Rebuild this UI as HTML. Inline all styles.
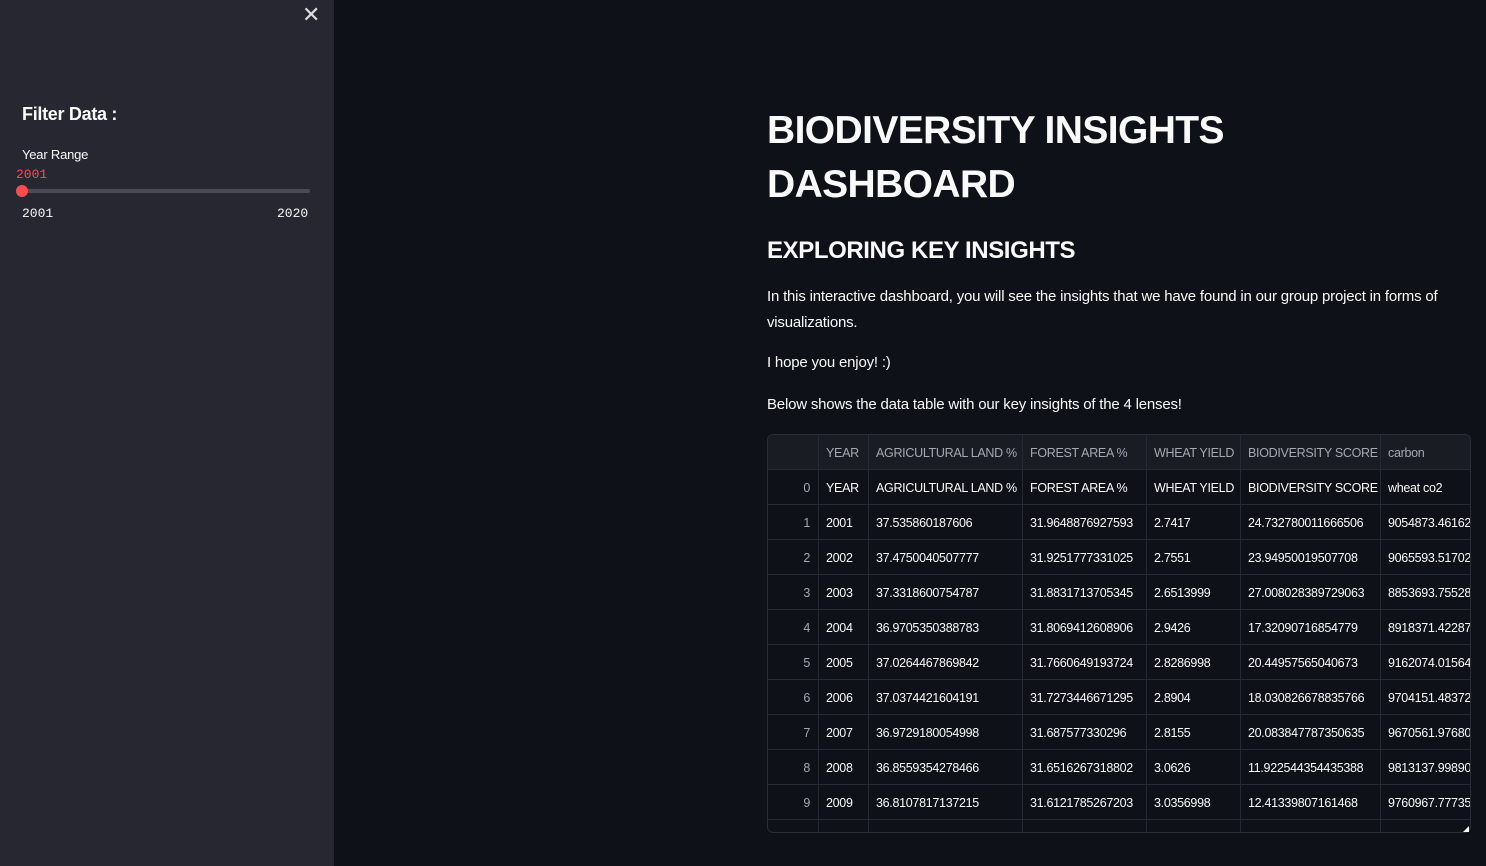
<!DOCTYPE html>
<html><head><style>
*{margin:0;padding:0;box-sizing:border-box}
body{width:1486px;height:866px;background:#0e1117;color:#fafafa;font-family:"Liberation Sans",sans-serif;position:relative;overflow:hidden}
.sb{position:absolute;left:0;top:0;width:334px;height:866px;background:#262730}
.abs{position:absolute;white-space:nowrap}
.mono{font-family:"Liberation Mono",monospace;font-size:13px}
.tbl{position:absolute;left:767px;top:434px;width:704px;height:399px;border:1px solid #2a2d36;border-radius:6px;overflow:hidden;background:#0e1117}
.c{position:absolute;height:35px;line-height:36px;font-size:12.5px;letter-spacing:-0.3px;padding-left:7px;white-space:nowrap;overflow:hidden;border-right:1px solid #262a33;border-bottom:1px solid #262a33}
.h{background:#1a1c23;color:#a3a8b4}
.idx{text-align:right;padding-right:8px;color:#a3a8b4}
</style></head><body>
<div class="sb">
<div class="abs" style="left:302px;top:2px;font-size:22px;color:#ddd">✕</div>
<div class="abs" style="left:22px;top:104px;font-size:18px;font-weight:bold;letter-spacing:-0.3px">Filter Data :</div>
<div class="abs" style="left:22px;top:147px;font-size:13px;letter-spacing:-0.2px">Year Range</div>
<div class="abs mono" style="left:16px;top:167px;color:#ff4b4b">2001</div>
<div class="abs" style="left:22px;top:189px;width:288px;height:4px;background:#4a4b55;border-radius:2px"></div>
<div class="abs" style="left:16px;top:185px;width:12px;height:12px;background:#ff4b4b;border-radius:50%"></div>
<div class="abs mono" style="left:22px;top:206px">2001</div>
<div class="abs mono" style="left:277px;top:206px">2020</div>
</div>
<div class="abs" style="left:767px;top:104px;font-size:39px;letter-spacing:-0.6px;font-weight:bold;line-height:54px">BIODIVERSITY INSIGHTS<br>DASHBOARD</div>
<div class="abs" style="left:767px;top:237px;font-size:24px;letter-spacing:-0.4px;font-weight:bold">EXPLORING KEY INSIGHTS</div>
<div class="abs" style="left:767px;top:284px;font-size:15px;letter-spacing:-0.2px;line-height:26px">In this interactive dashboard, you will see the insights that we have found in our group project in forms of<br>visualizations.</div>
<div class="abs" style="left:767px;top:354px;font-size:15px;letter-spacing:-0.2px">I hope you enjoy! :)</div>
<div class="abs" style="left:767px;top:396px;font-size:15px;letter-spacing:-0.2px">Below shows the data table with our key insights of the 4 lenses!</div>
<div class="tbl" id="t"></div>
<script>
var xs=[0,51,101,255,379,473,613,710];
var hd=["","YEAR","AGRICULTURAL LAND %","FOREST AREA %","WHEAT YIELD","BIODIVERSITY SCORE","carbon"];
var rows=[["0","YEAR","AGRICULTURAL LAND %","FOREST AREA %","WHEAT YIELD","BIODIVERSITY SCORE","wheat co2"],
["1","2001","37.535860187606","31.9648876927593","2.7417","24.732780011666506","9054873.46162"],
["2","2002","37.4750040507777","31.9251777331025","2.7551","23.94950019507708","9065593.51702"],
["3","2003","37.3318600754787","31.8831713705345","2.6513999","27.008028389729063","8853693.75528"],
["4","2004","36.9705350388783","31.8069412608906","2.9426","17.32090716854779","8918371.42287"],
["5","2005","37.0264467869842","31.7660649193724","2.8286998","20.44957565040673","9162074.01564"],
["6","2006","37.0374421604191","31.7273446671295","2.8904","18.030826678835766","9704151.48372"],
["7","2007","36.9729180054998","31.687577330296","2.8155","20.083847787350635","9670561.97680"],
["8","2008","36.8559354278466","31.6516267318802","3.0626","11.922544354435388","9813137.99890"],
["9","2009","36.8107817137215","31.6121785267203","3.0356998","12.41339807161468","9760967.77735"],
["","","","","","",""]];
var h="";
function cell(r,y,cls){for(var i=0;i<7;i++){h+='<div class="c '+cls+(i==0?' idx':'')+'" style="left:'+xs[i]+'px;top:'+y+'px;width:'+(xs[i+1]-xs[i])+'px">'+r[i]+'</div>';}}
cell(hd,0,"h");
for(var j=0;j<rows.length;j++)cell(rows[j],35*(j+1),"");
document.getElementById("t").innerHTML=h;
</script>
<div class="abs" style="left:1463px;top:826px;width:6px;height:6px;background:#fff;clip-path:polygon(100% 0,100% 100%,0 100%)"></div>
</body></html>
